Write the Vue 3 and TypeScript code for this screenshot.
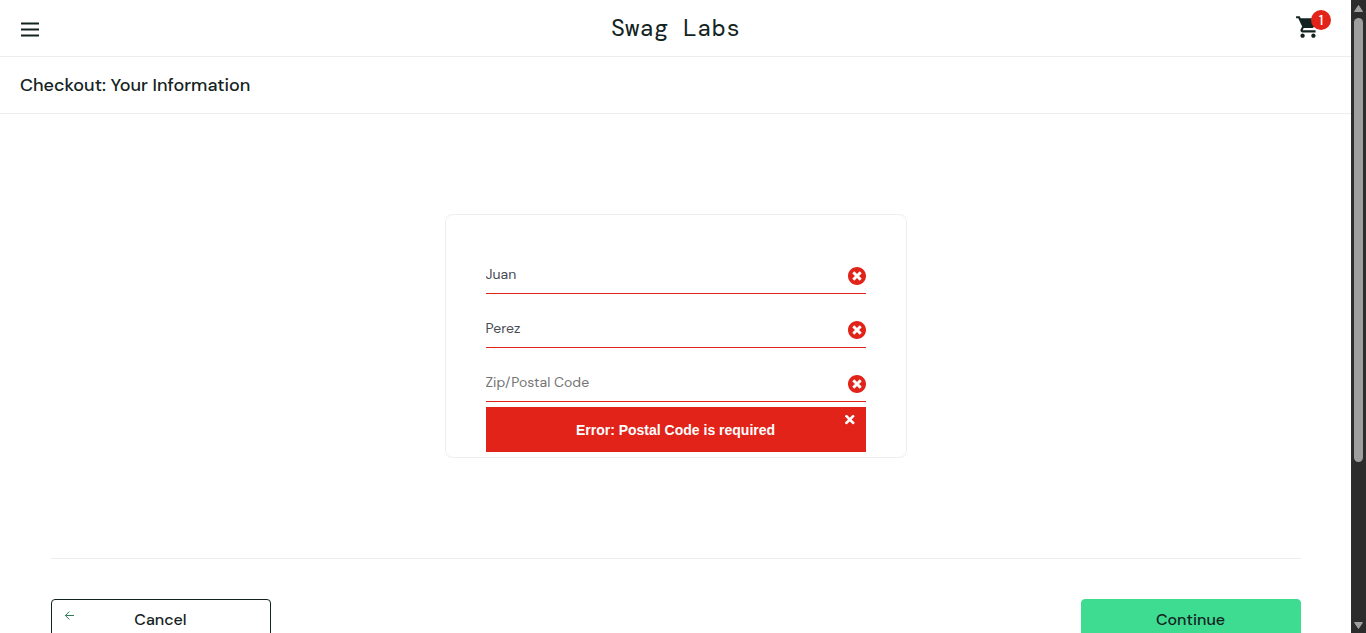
<script setup lang="ts">
import { ref } from 'vue'

interface Field {
  id: string
  label: string
  value: string
}

const cartCount = ref(1)
const error = ref('Error: Postal Code is required')
const fields = ref<Field[]>([
  { id: 'first-name', label: 'First Name', value: 'Juan' },
  { id: 'last-name', label: 'Last Name', value: 'Perez' },
  { id: 'postal-code', label: 'Zip/Postal Code', value: '' },
])

function submit(): void {
  const missing = fields.value.find((f) => !f.value)
  error.value = missing ? 'Error: Postal Code is required' : ''
}
</script>

<template>
  <div class="screen">
    <div class="page">
      <header class="top">
        <button class="menu" type="button" aria-label="Open Menu">
          <svg viewBox="0 0 20 16" width="20" height="16" aria-hidden="true">
            <path d="M1 1.4h18v2.1H1zM1 7.4h18v2.1H1zM1 13.4h18v2.1H1z" fill="#132322" />
          </svg>
        </button>
        <div class="logo">Swag Labs</div>
        <a class="cart" href="#" aria-label="Shopping cart">
          <svg viewBox="0 0 24 24" width="26" height="26" aria-hidden="true">
            <path
              fill="#132322"
              d="M7 18c-1.1 0-1.99.9-1.99 2S5.9 22 7 22s2-.9 2-2-.9-2-2-2zM1 2v2h2l3.6 7.59-1.35 2.45c-.16.28-.25.61-.25.96 0 1.1.9 2 2 2h12v-2H7.42c-.14 0-.25-.11-.25-.25l.03-.12.9-1.63h7.45c.75 0 1.41-.41 1.75-1.03l3.58-6.49c.08-.14.12-.31.12-.48 0-.55-.45-1-1-1H5.21l-.94-2H1zm16 16c-1.1 0-1.99.9-1.99 2s.89 2 1.99 2 2-.9 2-2-.9-2-2-2z"
            />
          </svg>
          <span class="badge">{{ cartCount }}</span>
        </a>
      </header>
      <div class="subhead">
        <h1 class="title">Checkout: Your Information</h1>
      </div>
      <form class="checkout" @submit.prevent="submit">
        <div class="card">
          <div v-for="field in fields" :key="field.id" class="field">
            <input
              :id="field.id"
              v-model="field.value"
              class="input"
              type="text"
              :placeholder="field.label"
              :aria-label="field.label"
            />
            <svg class="mark" viewBox="8 8 496 496" width="18" height="18" aria-hidden="true">
              <path
                fill="#e2231a"
                d="M256 8C119 8 8 119 8 256s111 248 248 248 248-111 248-248S393 8 256 8zm121.6 313.1c4.7 4.7 4.7 12.3 0 17L338 377.6c-4.7 4.7-12.3 4.7-17 0L256 312l-65.1 65.6c-4.7 4.7-12.3 4.7-17 0L134.4 338c-4.7-4.7-4.7-12.3 0-17l65.6-65-65.6-65.1c-4.7-4.7-4.7-12.3 0-17l39.6-39.6c4.7-4.7 12.3-4.7 17 0l65 65.7 65.1-65.6c4.7-4.7 12.3-4.7 17 0l39.6 39.6c4.7 4.7 4.7 12.3 0 17L312 256l65.6 65.1z"
              />
            </svg>
          </div>
          <div class="error-slot">
            <div v-if="error" class="error" role="alert">
              <h3 class="error-text">{{ error }}</h3>
              <button class="dismiss" type="button" aria-label="Dismiss" @click="error = ''">
                <svg viewBox="0 88 368 368" width="10" height="10" aria-hidden="true">
                  <path
                    fill="#fff"
                    d="M242.72 256l100.07-100.07c12.28-12.28 12.28-32.19 0-44.48l-22.24-22.24c-12.28-12.28-32.19-12.28-44.48 0L176 189.28 75.93 89.21c-12.28-12.28-32.19-12.28-44.48 0L9.21 111.45c-12.28 12.28-12.28 32.19 0 44.48L109.28 256 9.21 356.07c-12.28 12.28-12.28 32.19 0 44.48l22.24 22.24c12.28 12.28 32.2 12.28 44.48 0L176 322.72l100.07 100.07c12.28 12.28 32.2 12.28 44.48 0l22.24-22.24c12.28-12.28 12.28-32.19 0-44.48L242.72 256z"
                  />
                </svg>
              </button>
            </div>
          </div>
        </div>
        <div class="actions">
          <button class="btn cancel" type="button">
            <svg class="back" viewBox="0 0 10 10" width="10" height="10" aria-hidden="true">
              <path d="M10 5.5H1.4M5.4 1.5l-4 4 4 4" fill="none" stroke="#2f7a58" stroke-width="1" />
            </svg>
            Cancel
          </button>
          <button class="btn continue" type="submit">Continue</button>
        </div>
      </form>
    </div>
    <div class="scrollbar" aria-hidden="true">
      <svg viewBox="0 0 15 18" width="15" height="18">
        <path d="M7.5 5.5l4 6h-8z" fill="#9f9f9f" stroke="#9f9f9f" stroke-linejoin="round" />
      </svg>
      <div class="thumb-area"><div class="thumb"></div></div>
      <svg viewBox="0 0 15 15" width="15" height="15">
        <path d="M7.5 10.5l4-6h-8z" fill="#9f9f9f" stroke="#9f9f9f" stroke-linejoin="round" />
      </svg>
    </div>
  </div>
</template>

<style>
body {
  margin: 0;
  background: #fff;
}
</style>

<style scoped>
.screen {
  display: flex;
  height: 100vh;
  overflow: hidden;
  color: #132322;
  font-family: 'DM Sans', Inter, 'Liberation Sans', sans-serif;
}

.screen * {
  box-sizing: border-box;
}

.page {
  flex: 1;
  min-width: 0;
}

button,
input {
  font-family: inherit;
  color: inherit;
}

.top {
  display: grid;
  grid-template-columns: 1fr auto 1fr;
  align-items: center;
  height: 57px;
  padding: 0 20px;
  border-bottom: 1px solid #ededed;
}

.menu {
  display: flex;
  justify-self: start;
  padding: 2px 0 0;
  border: 0;
  background: none;
  cursor: pointer;
}

.logo {
  font-family: 'DM Mono', 'DejaVu Sans Mono', 'Liberation Mono', monospace;
  font-size: 24px;
  line-height: 32px;
}

.cart {
  position: relative;
  justify-self: end;
  display: flex;
  width: 36px;
  height: 28px;
  align-items: flex-start;
  text-decoration: none;
}

.badge {
  position: absolute;
  top: -4px;
  right: 0;
  width: 20px;
  height: 20px;
  border-radius: 50%;
  background: #e2231a;
  color: #fff;
  font-size: 14px;
  line-height: 20px;
  font-weight: 500;
  text-align: center;
}

.subhead {
  display: flex;
  align-items: center;
  height: 57px;
  padding: 0 20px;
  border-bottom: 1px solid #ededed;
}

.title {
  margin: 0;
  font-size: 18px;
  line-height: 24px;
  font-weight: 500;
}

.checkout {
  max-width: 1250px;
  margin: 0 auto;
  padding-top: 100px;
}

.card {
  max-width: 462px;
  margin: 0 auto 100px;
  padding: 40px 40px 0;
  border: 1px solid #ededed;
  border-radius: 8px;
}

.field {
  position: relative;
  margin-bottom: 15px;
}

.field:nth-child(3) {
  margin-bottom: 0;
}

.input {
  display: block;
  width: 100%;
  height: 39px;
  padding: 0;
  border: 0;
  border-bottom: 1px solid #e2231a;
  background: none;
  color: #484c55;
  font-size: 14px;
  outline: none;
}

.input::placeholder {
  color: #757575;
  opacity: 1;
}

.mark {
  position: absolute;
  top: 12px;
  right: 0;
}

.error-slot {
  padding: 5px 0;
}

.error {
  position: relative;
  display: flex;
  align-items: center;
  justify-content: center;
  min-height: 45px;
  background: #e2231a;
  color: #fff;
}

.error-text {
  margin: 0;
  font-family: 'Liberation Sans', Arial, sans-serif;
  font-size: 14px;
  line-height: 16px;
  font-weight: 700;
}

.dismiss {
  position: absolute;
  top: 8px;
  right: 11px;
  display: flex;
  padding: 0;
  border: 0;
  background: none;
  cursor: pointer;
}

.actions {
  display: flex;
  justify-content: space-between;
  padding: 40px 0 20px;
  border-top: 1px solid #ededed;
}

.btn {
  position: relative;
  width: 220px;
  height: 42px;
  padding: 0;
  border: 1px solid #132322;
  border-radius: 4px;
  background: #fff;
  font-size: 16px;
  line-height: 20px;
  font-weight: 500;
  cursor: pointer;
}

.continue {
  border-color: #3ddc91;
  background: #3ddc91;
}

.back {
  position: absolute;
  top: 10px;
  left: 12px;
}

.scrollbar {
  display: flex;
  flex-direction: column;
  width: 15px;
  background: #2c2c2c;
}

.thumb-area {
  flex: 1;
}

.thumb {
  width: 9px;
  height: 74%;
  margin: 0 auto;
  border-radius: 5px;
  background: #9f9f9f;
}
</style>
